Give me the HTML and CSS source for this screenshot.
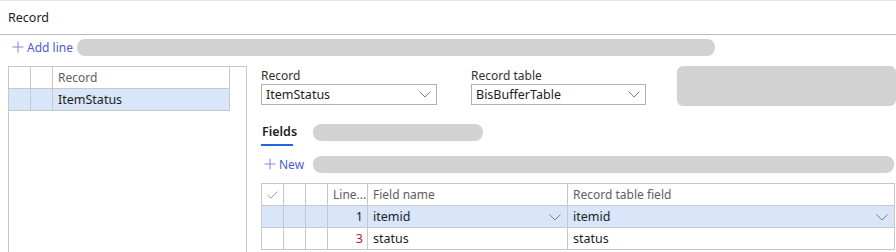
FILE: index.html
```html
<!DOCTYPE html>
<html lang="en">
<head>
<meta charset="utf-8">
<title>Record</title>
<link rel="stylesheet" href="styles.css">
</head>
<body>
<div class="page">
  <header class="title-bar">Record</header>
  <div class="action-bar">
    <button class="cmd cmd-add">
      <svg class="plus" width="12" height="12" viewBox="0 0 12 12"><path d="M6 0.5V11.5M0.5 6H11.5" stroke="currentColor" stroke-width="1" fill="none"/></svg>
      <span>Add line</span>
    </button>
    <div class="pill pill-action"></div>
  </div>
  <div class="content">
    <div class="left-pane">
      <table class="grid left-grid">
        <colgroup><col class="c-s"><col class="c-s"><col class="c-rec"></colgroup>
        <thead>
          <tr><th></th><th></th><th>Record</th></tr>
        </thead>
        <tbody>
          <tr class="selected"><td></td><td></td><td>ItemStatus</td></tr>
        </tbody>
      </table>
    </div>
    <div class="main">
      <div class="form-row">
        <div class="field field-record">
          <label class="label">Record</label>
          <div class="select"><span>ItemStatus</span>
            <svg class="chev" width="12" height="7" viewBox="0 0 12 7"><path d="M0.5 0.5L6 6L11.5 0.5" stroke="currentColor" stroke-width="1" fill="none"/></svg>
          </div>
        </div>
        <div class="field field-table">
          <label class="label">Record table</label>
          <div class="select"><span>BisBufferTable</span>
            <svg class="chev" width="12" height="7" viewBox="0 0 12 7"><path d="M0.5 0.5L6 6L11.5 0.5" stroke="currentColor" stroke-width="1" fill="none"/></svg>
          </div>
        </div>
        <div class="gray-box"></div>
      </div>
      <div class="tab-row">
        <span class="tab active">Fields</span>
        <div class="pill pill-tab"></div>
      </div>
      <div class="sub-actions">
        <button class="cmd cmd-new">
          <svg class="plus" width="12" height="12" viewBox="0 0 12 12"><path d="M6 0.5V11.5M0.5 6H11.5" stroke="currentColor" stroke-width="1" fill="none"/></svg>
          <span>New</span>
        </button>
        <div class="pill pill-sub"></div>
      </div>
      <table class="grid fields-grid">
        <colgroup>
          <col class="c-s"><col class="c-s"><col class="c-s"><col class="c-line"><col class="c-name"><col class="c-tf">
        </colgroup>
        <thead>
          <tr>
            <th class="check-h"><svg width="11" height="8" viewBox="0 0 11 8"><path d="M0.5 4L3.8 7.2L10.5 0.5" stroke="#a19f9d" stroke-width="1" fill="none"/></svg></th>
            <th></th><th></th>
            <th>Line...</th>
            <th>Field name</th>
            <th>Record table field</th>
          </tr>
        </thead>
        <tbody>
          <tr class="selected">
            <td></td><td></td><td></td>
            <td class="num">1</td>
            <td class="dd"><span>itemid</span><svg class="chev" width="12" height="7" viewBox="0 0 12 7"><path d="M0.5 0.5L6 6L11.5 0.5" stroke="currentColor" stroke-width="1" fill="none"/></svg></td>
            <td class="dd"><span>itemid</span><svg class="chev" width="12" height="7" viewBox="0 0 12 7"><path d="M0.5 0.5L6 6L11.5 0.5" stroke="currentColor" stroke-width="1" fill="none"/></svg></td>
          </tr>
          <tr>
            <td></td><td></td><td></td>
            <td class="num num-red">3</td>
            <td>status</td>
            <td>status</td>
          </tr>
        </tbody>
      </table>
    </div>
  </div>
</div>
</body>
</html>
```

FILE: styles.css
```css
* { box-sizing: border-box; }
html, body {
  margin: 0;
  padding: 0;
  background: #ffffff;
}
body {
  font-family: "Noto Sans", "Open Sans", sans-serif;
  font-size: 12px;
  color: #201f1e;
  width: 896px;
  height: 252px;
  overflow: hidden;
}
.page {
  display: flex;
  flex-direction: column;
}
.title-bar {
  height: 35px;
  border-top: 1px solid #e6e6e6;
  border-bottom: 1px solid #bdbdbd;
  padding-left: 8px;
  display: flex;
  align-items: center;
  font-size: 12.5px;
  color: #201f1e;
}
.action-bar {
  height: 24px;
  display: flex;
  align-items: center;
  padding-left: 12px;
  gap: 4px;
}
.cmd {
  display: flex;
  align-items: center;
  gap: 3px;
  border: 0;
  background: transparent;
  padding: 0;
  font: inherit;
  font-size: 12px;
  color: #4f5bd5;
}
.cmd .plus { color: #7f86e0; }
.pill {
  background: #d2d2d2;
  border-radius: 8px;
}
.pill-action {
  width: 638px;
  height: 17px;
}
.content {
  display: flex;
  margin-top: 7px;
  padding-left: 8px;
  gap: 14px;
}
.left-pane {
  width: 239px;
  height: 200px;
  border: 1px solid #c8c8c8;
}
.grid {
  border-collapse: collapse;
  table-layout: fixed;
}
.grid th, .grid td {
  border: 1px solid #c8c8c8;
  height: 22px;
  padding: 0 5px;
  text-align: left;
  white-space: nowrap;
  overflow: hidden;
}
.grid th {
  font-weight: normal;
  color: #605e5c;
}
.grid td { color: #201f1e; }
.left-grid {
  width: 221px;
  margin-left: -1px;
  margin-top: -1px;
}
.c-s { width: 22px; }
.c-rec { width: 177px; }
.selected td { background: #d9e5f8; }
.main {
  width: 635px;
  display: flex;
  flex-direction: column;
}
.form-row {
  display: flex;
  align-items: flex-start;
}
.field {
  display: flex;
  flex-direction: column;
  padding-top: 2px;
}
.field-record { width: 176px; }
.field-table { width: 175px; margin-left: 34px; }
.label {
  font-size: 12px;
  color: #323130;
  height: 16px;
  line-height: 15px;
}
.select {
  height: 21px;
  border: 1px solid #b3b0ad;
  display: flex;
  align-items: center;
  justify-content: space-between;
  padding: 0 5px 0 4px;
  font-size: 12.5px;
  color: #201f1e;
}
.chev { color: #7a7d8a; flex-shrink: 0; }
.gray-box {
  width: 219px;
  height: 40px;
  margin-left: 31px;
  margin-top: 0;
  background: #d2d2d2;
  border-radius: 6px;
}
.tab-row {
  display: flex;
  align-items: center;
  margin-top: 15px;
  height: 24px;
}
.tab {
  width: 52px;
  height: 24px;
  display: flex;
  align-items: center;
  padding-bottom: 3px;
  font-size: 12.5px;
  font-weight: 600;
  color: #201f1e;
  position: relative;
  padding-left: 1px;
}
.tab.active::after {
  content: "";
  position: absolute;
  left: 0;
  bottom: -1px;
  width: 32px;
  height: 2px;
  background: #2266e3;
}
.pill-tab {
  width: 170px;
  height: 17px;
  margin-top: -2px;
}
.sub-actions {
  display: flex;
  align-items: center;
  margin-top: 10px;
  height: 18px;
  padding-left: 3px;
}
.cmd-new { width: 49px; }
.pill-sub {
  width: 581px;
  height: 17px;
}
.fields-grid {
  width: 633px;
  margin-top: 10px;
}
.c-line { width: 40px; }
.c-name { width: 200px; }
.c-tf { width: 327px; }
.check-h { padding: 0 5px !important; }
.check-h svg { display: block; }
.num { text-align: right !important; padding-right: 4px !important; }
.num-red { color: #a4262c !important; }
.dd span { float: left; }
.dd .chev { float: right; margin-top: 6px; margin-right: 1px; }
.fields-grid td { font-size: 12.5px; }
.left-grid td { font-size: 12.5px; }
```
